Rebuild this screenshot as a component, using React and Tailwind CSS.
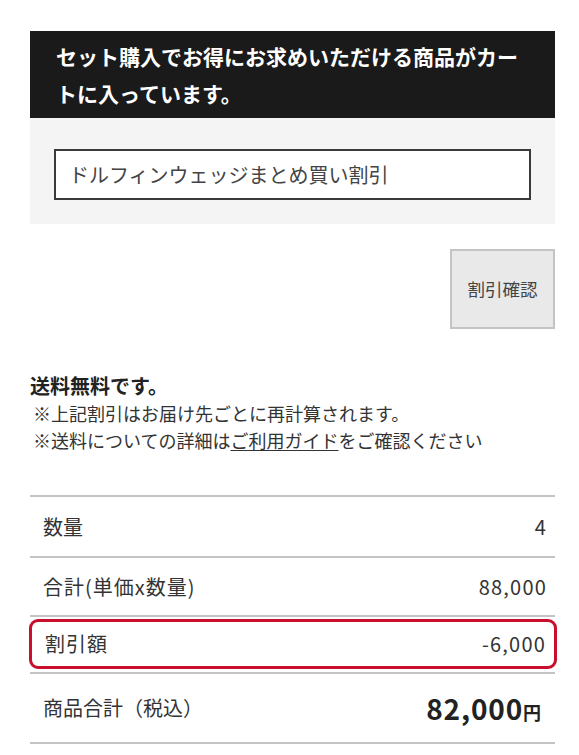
import React from 'react'

const font = { fontFamily: '"Noto Sans CJK JP", "Noto Sans", sans-serif' }

function Row({ label, value, className = '' }) {
  return (
    <div className={`flex items-center justify-between pl-[13px] pr-[8px] ${className}`}>
      <span className="text-[20px] text-[#333]">{label}</span>
      <span className="text-[20px] tracking-[0.06em] text-[#333]">{value}</span>
    </div>
  )
}

export default function App() {
  return (
    <div className="min-h-[755px] bg-white" style={font}>
      <div className="ml-[30px] w-[525px] pt-[31px]">
        <section>
          <h2 className="bg-[#1a1a1a] px-[26px] pb-[6px] pt-[7px] text-[21px] font-bold leading-[37px] text-white">
            セット購入でお得にお求めいただける商品がカートに入っています。
          </h2>
          <div className="bg-[#f4f4f4] px-[24px] pb-[24px] pt-[31px]">
            <div className="flex h-[51px] items-center border-2 border-[#3a3a3a] bg-white pl-[13px] text-[20px] text-[#444]">
              ドルフィンウェッジまとめ買い割引
            </div>
          </div>
        </section>

        <div className="mt-[25px] flex justify-end">
          <button
            type="button"
            className="h-[80px] w-[105px] border-2 border-[#c4c4c4] bg-[#e9e9e9] text-[17.5px] text-[#444]"
          >
            割引確認
          </button>
        </div>

        <div className="mt-[44px]">
          <p className="text-[20px] font-bold leading-[26px] text-[#222]">送料無料です。</p>
          <div className="pl-[3px] pt-[1px] text-[18px] leading-[27px] text-[#333]">
            <p>※上記割引はお届け先ごとに再計算されます。</p>
            <p>
              ※送料についての詳細は<span className="underline underline-offset-2">ご利用ガイド</span>をご確認ください
            </p>
          </div>
        </div>

        <div className="mt-[41px]">
          <div className="border-t-2 border-[#c4c4c4]">
            <Row label="数量" value="4" className="h-[59px]" />
          </div>
          <div className="border-t-2 border-[#c4c4c4]">
            <Row label="合計(単価x数量)" value="88,000" className="h-[57px] [&>span:first-child]:tracking-[0.05em]" />
          </div>
          <div className="border-t-2 border-[#c4c4c4] pt-[2px]">
            <div className="-ml-[1px] -mr-[2px] rounded-[9px] border-[3px] border-[#c8102e]">
              <Row label="割引額" value="-6,000" className="h-[44px] pl-[11px] pr-[7px] [&>span:first-child]:tracking-[0.05em]" />
            </div>
          </div>
          <div className="mt-[3px] border-t-2 border-b-2 border-[#c4c4c4]">
            <div className="flex h-[68px] items-center justify-between pl-[13px] pr-[14px]">
              <span className="text-[20px] text-[#333]">商品合計（税込）</span>
              <span className="font-bold text-[#222]">
                <span className="text-[28px] tracking-[0.03em]">82,000</span>
                <span className="text-[18px]">円</span>
              </span>
            </div>
          </div>
        </div>
      </div>
    </div>
  )
}
